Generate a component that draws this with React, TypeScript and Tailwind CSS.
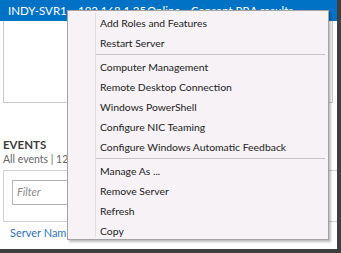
const items: (string | null)[] = [
  'Add Roles and Features',
  'Restart Server',
  null,
  'Computer Management',
  'Remote Desktop Connection',
  'Windows PowerShell',
  'Configure NIC Teaming',
  'Configure Windows Automatic Feedback',
  null,
  'Manage As ...',
  'Remove Server',
  'Refresh',
  'Copy',
]

function ContextMenu() {
  return (
    <div className="absolute left-[67px] top-[10px] w-[262px] h-[230px] bg-[#f6f2f6] border border-[#a3a3a3] shadow-[2px_2px_2px_rgba(0,0,0,0.25)] pt-[2px] text-[10.4px]">
      <div className="absolute left-[27px] top-[2px] bottom-[2px] w-px bg-[#e2dde2]" />
      {items.map((label, i) =>
        label ? (
          <div key={i} className="h-[20px] leading-[20px] pl-[32px] text-[#1b1b1b] whitespace-nowrap">
            {label}
          </div>
        ) : (
          <div key={i} className="h-[4px] pt-[1px]">
            <div className="ml-[28px] mr-[3px] h-px bg-[#c6c2c6]" />
          </div>
        )
      )}
    </div>
  )
}

export default function App() {
  return (
    <div className="w-[341px] h-[253px] bg-white overflow-hidden relative font-['Lato','Noto_Sans',sans-serif] text-[11px]">
      <div className="w-[337px] h-[249px] relative">
        <div className="h-[21px] bg-[#0072c6] text-white text-[11.5px] flex items-center whitespace-nowrap overflow-hidden">
          <span className="pl-[8px] w-[78px] shrink-0">INDY-SVR1</span>
          <span className="w-[69px] shrink-0">192.168.1.25</span>
          <span>Online - Consent PRA results</span>
        </div>
        <div className="ml-[3px] w-[330px] h-[82px] border-l border-r border-b border-[#c9c9c9]" />

        <div className="pl-[3px] mt-[34px]">
          <div className="font-bold text-[11.5px] leading-[15px] text-[#3c3c3c]">EVENTS</div>
          <div className="leading-[14px] text-[10.5px] text-[#666] whitespace-nowrap">All events | 125 total</div>
        </div>

        <div className="ml-[3px] mt-[4px] h-[52px] border-l border-t border-b border-[#d0d0d0] pl-[8px] pt-[9px]">
          <div className="w-[220px] h-[25px] border border-[#b5b5b5] pl-[4px] flex items-center italic text-[#8a8a8a]">
            Filter
          </div>
        </div>
        <div className="pl-[10px] h-[23px] flex items-center text-[#2e73c0] whitespace-nowrap">Server Name</div>

        <ContextMenu />
      </div>
      <div className="absolute right-0 top-0 w-[4px] h-[253px] bg-[#3f3f3f]" />
      <div className="absolute left-0 bottom-0 w-[341px] h-[4px] bg-[#3f3f3f]" />
    </div>
  )
}
